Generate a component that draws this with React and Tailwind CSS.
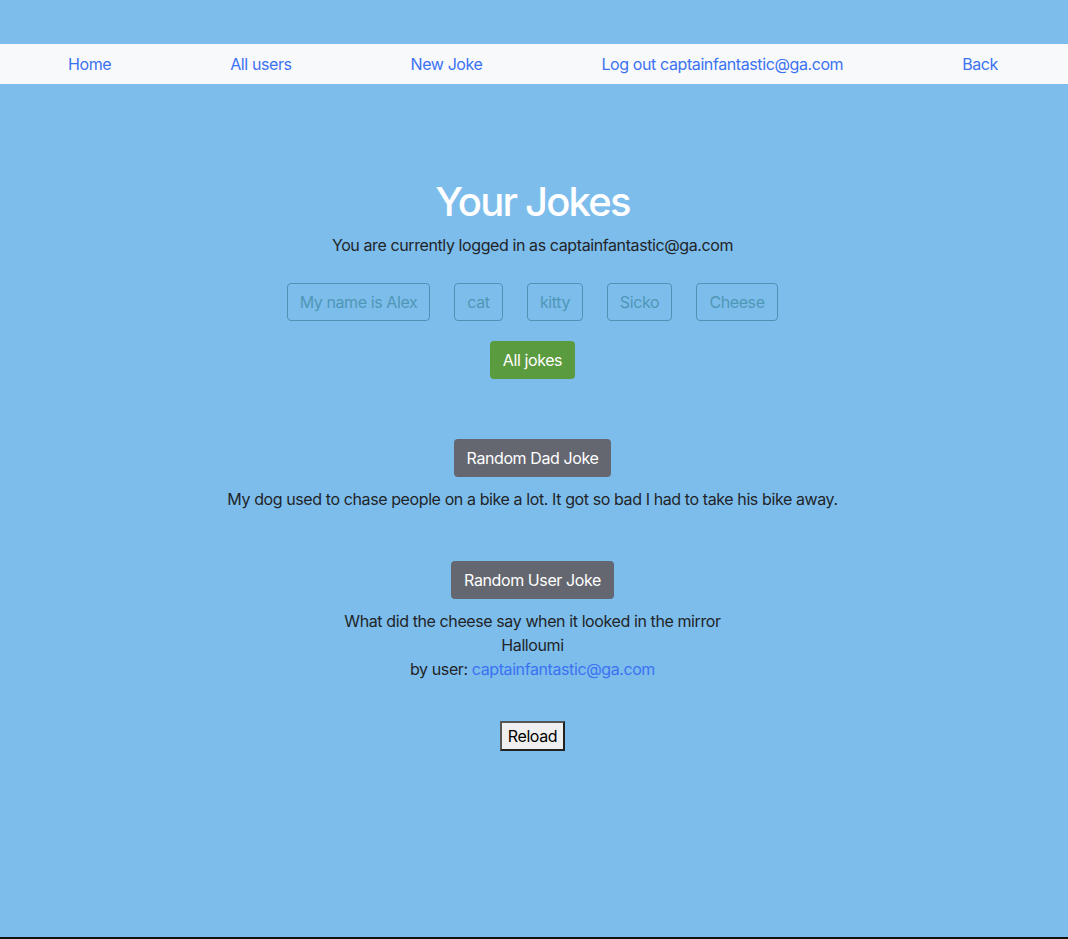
export default function App() {
  const font = { fontFamily: 'Inter, "Noto Sans", sans-serif' };
  return (
    <div className="min-h-[939px] bg-[#7dbdec] border-b-2 border-[#111] flex flex-col text-[16px] tracking-[-0.4px] text-[#212529]" style={font}>
      <div className="h-[44px]" />
      <nav className="h-[40px] bg-[#f8f9fa] flex items-center justify-between pl-[68px] pr-[70px] text-[#3b72f2]">
        <a href="#" className="leading-6">Home</a>
        <a href="#" className="leading-6">All users</a>
        <a href="#" className="leading-6">New Joke</a>
        <a href="#" className="leading-6">Log out captainfantastic@ga.com</a>
        <a href="#" className="leading-6">Back</a>
      </nav>
      <main className="flex flex-col items-center pt-[94px] pr-[3px]">
        <h1 className="text-[40px] font-medium text-white leading-[48px] tracking-[-1.8px]">Your Jokes</h1>
        <p className="leading-6 mt-[7px]">You are currently logged in as captainfantastic@ga.com</p>
        <div className="flex gap-[24px] mt-[26px]">
          {[["My name is Alex", "w-[143px]"], ["cat", "w-[49px]"], ["kitty", "w-[56px]"], ["Sicko", "w-[65px]"], ["Cheese", "w-[82px]"]].map(([t, w]) => (
            <div key={t} className={`${w} h-[38px] border border-[#4d93b4] rounded-[4px] flex items-center justify-center text-[#4f97b6] whitespace-nowrap`}>{t}</div>
          ))}
        </div>
        <button className="mt-[20px] h-[38px] px-[13px] bg-[#5b9b3f] text-white rounded-[4px]">All jokes</button>
        <button className="mt-[60px] h-[38px] px-[13px] bg-[#646770] text-white rounded-[4px]">Random Dad Joke</button>
        <p className="leading-6 mt-[10px]">My dog used to chase people on a bike a lot. It got so bad I had to take his bike away.</p>
        <button className="mt-[50px] h-[38px] px-[13px] bg-[#646770] text-white rounded-[4px]">Random User Joke</button>
        <div className="mt-[10px] flex flex-col items-center leading-6">
          <p>What did the cheese say when it looked in the mirror</p>
          <p>Halloumi</p>
          <p>by user: <a href="#" className="text-[#3b72f2]">captainfantastic@ga.com</a></p>
        </div>
        <button className="mt-[40px] h-[30px] px-[6px] bg-[#efefef] text-black border-2 border-t-[#555] border-l-[#555] border-b-[#222] border-r-[#222]">Reload</button>
      </main>
    </div>
  );
}
